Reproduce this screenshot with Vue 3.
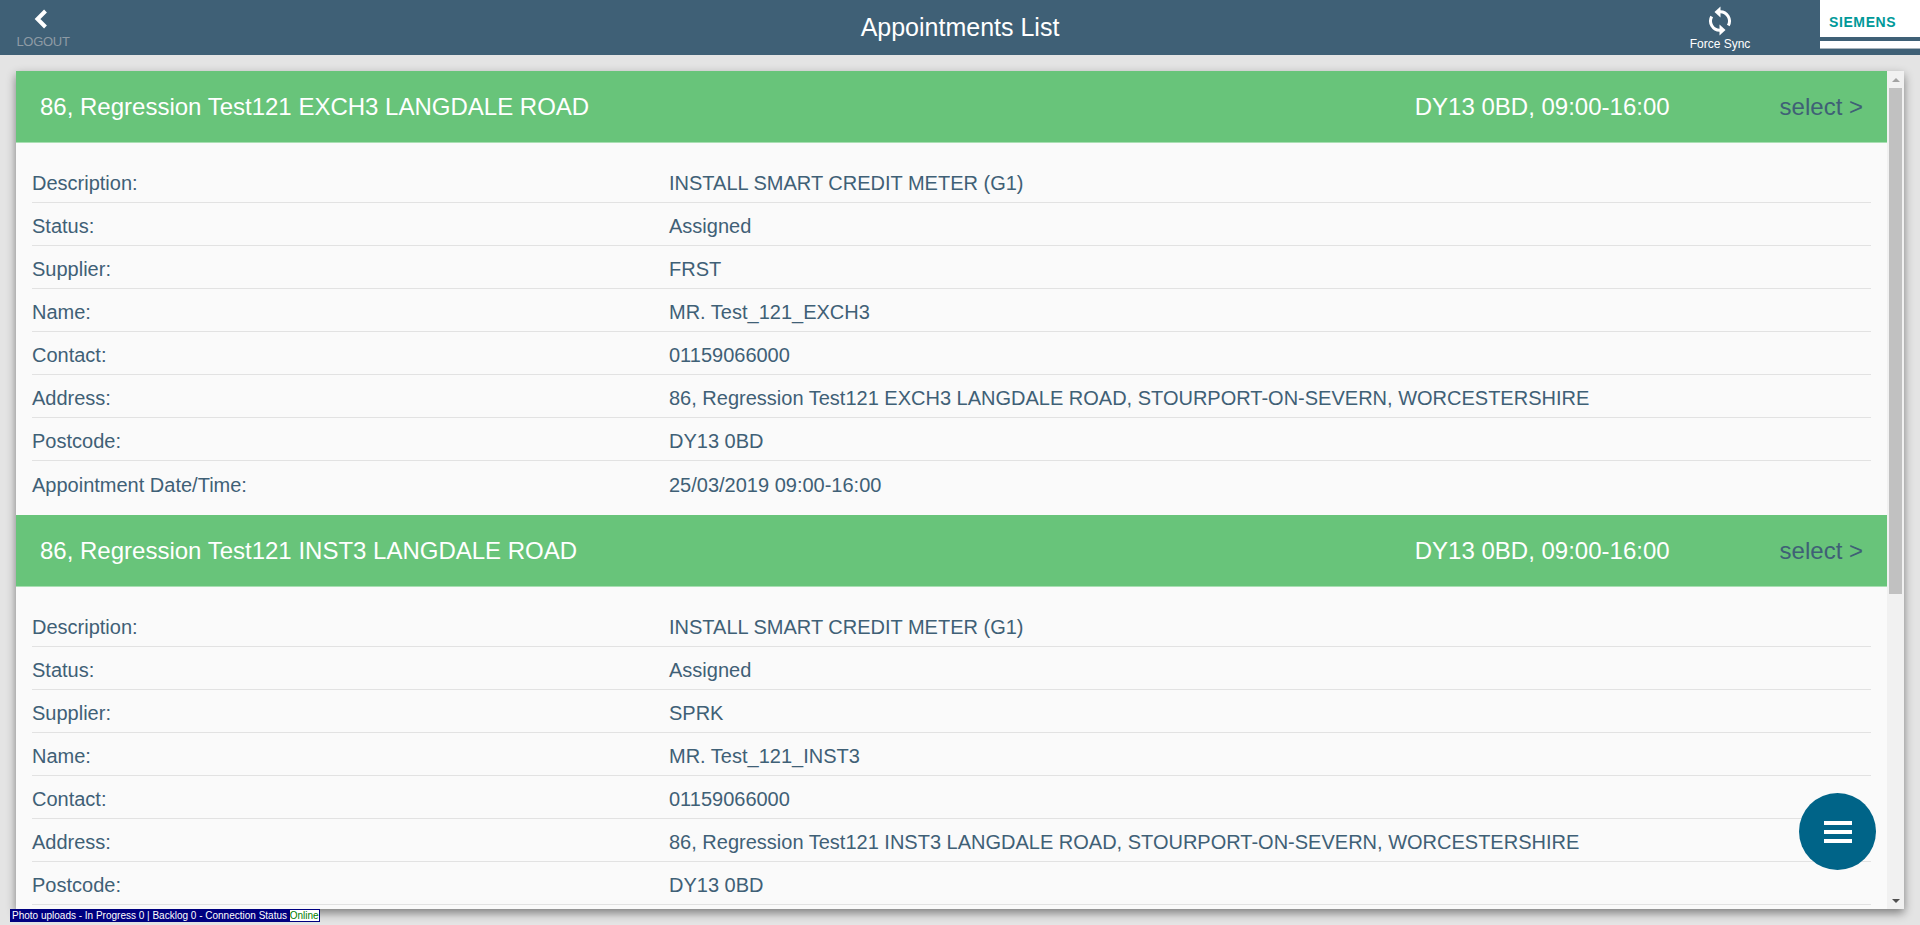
<script setup>
const fields = (a) => [
  { label: 'Description:', value: 'INSTALL SMART CREDIT METER (G1)' },
  { label: 'Status:', value: 'Assigned' },
  { label: 'Supplier:', value: a.supplier },
  { label: 'Name:', value: 'MR. Test_121_' + a.code },
  { label: 'Contact:', value: '01159066000' },
  { label: 'Address:', value: `86, Regression Test121 ${a.code} LANGDALE ROAD, STOURPORT-ON-SEVERN, WORCESTERSHIRE` },
  { label: 'Postcode:', value: 'DY13 0BD' },
  { label: 'Appointment Date/Time:', value: '25/03/2019 09:00-16:00' },
]

const appointments = [
  { code: 'EXCH3', supplier: 'FRST' },
  { code: 'INST3', supplier: 'SPRK' },
  { code: 'EXCH4', supplier: 'FRST' },
]
</script>

<template>
  <div class="page">
    <header class="topbar">
      <div class="logout">
        <svg class="back" width="14" height="20" viewBox="0 0 14 20">
          <path d="M11.5 2 L3.5 10 L11.5 18" fill="none" stroke="#fff" stroke-width="4" />
        </svg>
        <span>LOGOUT</span>
      </div>
      <h1 class="title">Appointments List</h1>
      <div class="actions">
        <div class="sync">
          <svg width="24" height="32" viewBox="0 0 24 32">
            <path d="M12 6.7 A9.3 9.3 0 0 1 20.3 20.5" fill="none" stroke="#fff" stroke-width="3" />
            <polygon points="6.5,7 12.5,1.5 12.5,12.5" fill="#fff" />
            <path d="M12 25.3 A9.3 9.3 0 0 1 3.7 11.5" fill="none" stroke="#fff" stroke-width="3" />
            <polygon points="17.5,25 11.5,19.5 11.5,30.5" fill="#fff" />
          </svg>
          <span>Force Sync</span>
        </div>
        <div class="logo">
          <div class="logo-box"><span>SIEMENS</span></div>
          <div class="logo-stripe"></div>
        </div>
      </div>
    </header>

    <main class="content">
      <div class="panel">
        <div class="list">
          <section class="card" v-for="a in appointments" :key="a.code">
            <div class="card-head">
              <span class="card-title">86, Regression Test121 {{ a.code }} LANGDALE ROAD</span>
              <span class="card-when">DY13 0BD, 09:00-16:00</span>
              <a class="card-select">select &gt;</a>
            </div>
            <div class="card-body">
              <div class="row" v-for="f in fields(a)" :key="f.label">
                <span>{{ f.label }}</span>
                <span>{{ f.value }}</span>
              </div>
            </div>
          </section>
        </div>
        <div class="scrollbar">
          <div class="arrow"><i class="up"></i></div>
          <div class="track"><div class="thumb"></div></div>
          <div class="arrow"><i class="down"></i></div>
        </div>
      </div>
    </main>

    <button class="fab" type="button" aria-label="Menu">
      <i></i><i></i><i></i>
    </button>

    <div class="status">
      Photo uploads - In Progress 0 | Backlog 0 - Connection Status <span class="online">Online</span>
    </div>
  </div>
</template>

<style>
html, body {
  margin: 0;
  background: #e4e4e4;
}
</style>

<style scoped>
.page {
  height: 100vh;
  display: flex;
  flex-direction: column;
  overflow: hidden;
  font-family: "Liberation Sans", Arial, sans-serif;
  color: #3f6076;
  background: #e4e4e4;
}

.topbar {
  flex: none;
  height: 55px;
  background: #3f6076;
  display: grid;
  grid-template-columns: 1fr auto 1fr;
  align-items: start;
}

.logout {
  width: 86px;
  display: flex;
  flex-direction: column;
  align-items: center;
  padding-top: 9px;
  font-size: 13px;
  line-height: 15px;
  color: #8e9ba5;
  letter-spacing: -0.3px;
}

.back {
  display: block;
  margin: 0 4px 5px 0;
}

.title {
  margin: 0;
  font-size: 25px;
  font-weight: 400;
  line-height: 55px;
  color: #fff;
}

.actions {
  display: flex;
  justify-content: flex-end;
}

.sync {
  width: 100px;
  margin-right: 50px;
  padding-top: 5px;
  display: flex;
  flex-direction: column;
  align-items: center;
  color: #fff;
  font-size: 12px;
  line-height: 14px;
}

.logo {
  width: 100px;
}

.logo-box {
  height: 37px;
  background: #fff;
  padding-left: 9px;
  box-sizing: border-box;
  font-size: 14px;
  line-height: 44px;
  font-weight: 700;
  color: #009999;
  letter-spacing: 0.6px;
}

.logo-stripe {
  height: 7px;
  margin-top: 4px;
  background: #fff;
  border-bottom: 1px solid #a9b4bc;
}

.content {
  flex: 1;
  min-height: 0;
  padding: 16px;
  display: flex;
}

.panel {
  flex: 1;
  min-width: 0;
  display: flex;
  background: #fafafa;
  box-shadow: 0 4px 9px rgba(0, 0, 0, 0.45);
}

.list {
  flex: 1;
  min-width: 0;
  overflow-y: auto;
  scrollbar-width: none;
}

.scrollbar {
  flex: none;
  width: 17px;
  display: flex;
  flex-direction: column;
  background: #f1f1f1;
}

.arrow {
  flex: none;
  height: 17px;
  display: flex;
  align-items: center;
  justify-content: center;
}

.arrow i {
  display: block;
  width: 0;
  height: 0;
  border-left: 4px solid transparent;
  border-right: 4px solid transparent;
}

.arrow .up {
  border-bottom: 4px solid #a3a3a3;
}

.arrow .down {
  border-top: 4px solid #505050;
}

.track {
  flex: 1;
  padding: 0 2px;
}

.thumb {
  height: 506px;
  background: #c1c1c1;
}

.card-head {
  height: 72px;
  box-sizing: border-box;
  padding: 0 24px;
  display: flex;
  align-items: center;
  background: #68c47a;
  border-bottom: 1px solid #a9dfb3;
  color: #fff;
  font-size: 24px;
}

.card-title {
  flex: 1;
}

.card-select {
  margin-left: 110px;
  color: #3f6076;
}

.card-body {
  padding: 17px 16px 11px;
}

.row {
  height: 43px;
  box-sizing: border-box;
  padding-top: 5px;
  display: grid;
  grid-template-columns: 637px 1fr;
  align-items: center;
  font-size: 20px;
  border-bottom: 1px solid #e2e2e2;
}

.row:last-child {
  border-bottom: 0;
}

.fab {
  position: fixed;
  left: 1799px;
  top: 793px;
  width: 77px;
  height: 77px;
  padding: 0;
  border: 0;
  border-radius: 50%;
  background: #006488;
  display: flex;
  flex-direction: column;
  align-items: center;
  justify-content: center;
  gap: 5px;
}

.fab i {
  display: block;
  width: 28px;
  height: 4px;
  background: #fff;
}

.status {
  position: fixed;
  left: 10px;
  top: 909px;
  width: 310px;
  height: 13px;
  box-sizing: border-box;
  padding-left: 2px;
  background: #000080;
  color: #fff;
  font-size: 10px;
  line-height: 13px;
  white-space: nowrap;
}

.online {
  background: #fff;
  color: #008000;
}
</style>
